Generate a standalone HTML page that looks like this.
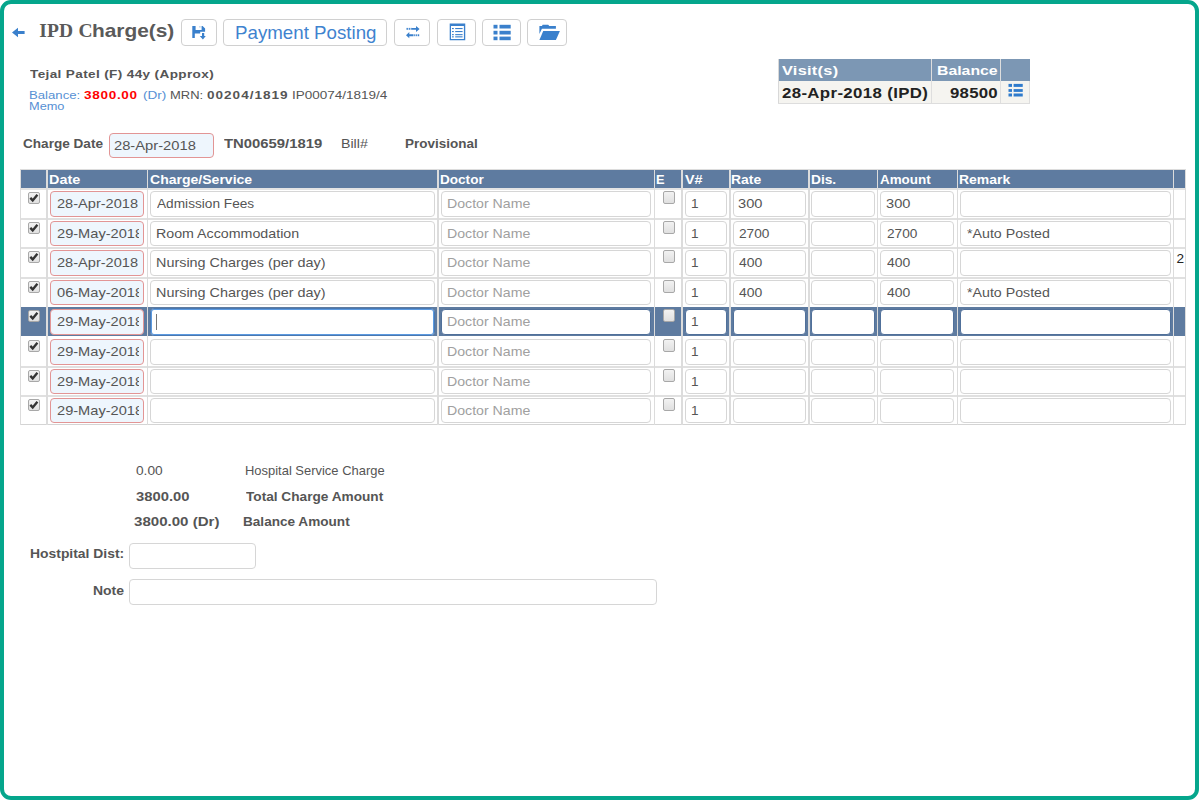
<!DOCTYPE html>
<html><head><meta charset="utf-8"><title>IPD Charge(s)</title>
<style>
html,body{margin:0;padding:0;background:#fff;}
body{width:1200px;height:800px;position:relative;overflow:hidden;font-family:"Liberation Sans",sans-serif;}
.a{position:absolute;box-sizing:border-box;}
.t{position:absolute;white-space:pre;}
.btn{position:absolute;box-sizing:border-box;border:1px solid #d0d0d0;border-radius:4px;background:#fff;}
.in{position:absolute;box-sizing:border-box;border:1px solid #d6d6d6;border-radius:4px;background:#fff;}
.dt{position:absolute;box-sizing:border-box;border:1px solid #e29595;border-radius:4px;background:#eef6fd;}
.cb{position:absolute;box-sizing:border-box;width:12px;height:12.5px;border:1px solid #a8a8a8;border-radius:2px;background:linear-gradient(#f2f2f2,#e0e0e0);}
.vl{position:absolute;width:1.5px;background:#dcdcdc;}
.hl{position:absolute;height:1.5px;background:#dcdcdc;}
</style></head><body>

<div class="a" style="left:0;top:0;width:1199px;height:800px;border:4px solid #05a68c;border-radius:11px;"></div>
<div class="btn" style="left:181px;top:19.4px;width:36.4px;height:27px;"></div>
<div class="btn" style="left:223.4px;top:19.4px;width:164.0px;height:27px;"></div>
<div class="btn" style="left:394.4px;top:19.4px;width:36.0px;height:27px;"></div>
<div class="btn" style="left:437px;top:19.4px;width:39.4px;height:27px;"></div>
<div class="btn" style="left:482px;top:19.4px;width:39.4px;height:27px;"></div>
<div class="btn" style="left:527.4px;top:19.4px;width:39.6px;height:27px;"></div>
<div class="a" style="left:778px;top:59.3px;width:251.5px;height:21.5px;background:#7c97b4;"></div>
<div class="a" style="left:778px;top:80.8px;width:251.5px;height:22.8px;background:#f5f4f0;border:1px solid #dddddd;border-top:0;"></div>
<div class="a" style="left:778px;top:59px;width:1px;height:44px;background:#d8d8d8;"></div>
<div class="a" style="left:931.2px;top:59.3px;width:1.3px;height:43.8px;background:#dedede;"></div>
<div class="a" style="left:999.8px;top:59.3px;width:1.3px;height:43.8px;background:#dedede;"></div>
<div class="dt" style="left:108.5px;top:132.8px;width:105px;height:25.6px;"></div>
<div class="a" style="left:19.5px;top:170px;width:1166.5px;height:18.3px;background:#5e7ba0;"></div>
<div class="a" style="left:19.5px;top:307.3px;width:1166.5px;height:28.8px;background:#5e7ba0;"></div>
<div class="hl" style="left:19.5px;top:169px;width:1166.5px;height:1px;"></div>
<div class="hl" style="left:19.5px;top:188px;width:1166.5px;height:2px;background:#e4e4e4;"></div>
<div class="hl" style="left:19.5px;top:218px;width:1166.5px;height:2px;background:#e0e0e0;"></div>
<div class="hl" style="left:19.5px;top:247px;width:1166.5px;height:2px;background:#e0e0e0;"></div>
<div class="hl" style="left:19.5px;top:277px;width:1166.5px;height:2px;background:#e0e0e0;"></div>
<div class="hl" style="left:19.5px;top:366px;width:1166.5px;height:2px;background:#e0e0e0;"></div>
<div class="hl" style="left:19.5px;top:395px;width:1166.5px;height:2px;background:#e0e0e0;"></div>
<div class="hl" style="left:19.5px;top:424px;width:1166.5px;height:1px;background:#d4d4d4;"></div>
<div class="vl" style="left:19.5px;top:169px;width:1px;height:256px;"></div>
<div class="vl" style="left:46.3px;top:169px;width:1.5px;height:256px;"></div>
<div class="vl" style="left:146.8px;top:169px;width:1.5px;height:256px;"></div>
<div class="vl" style="left:437.2px;top:169px;width:1.5px;height:256px;"></div>
<div class="vl" style="left:653.9px;top:169px;width:1.5px;height:256px;"></div>
<div class="vl" style="left:681.3px;top:169px;width:1.5px;height:256px;"></div>
<div class="vl" style="left:729.0px;top:169px;width:1.5px;height:256px;"></div>
<div class="vl" style="left:808.1px;top:169px;width:1.5px;height:256px;"></div>
<div class="vl" style="left:876.8px;top:169px;width:1.5px;height:256px;"></div>
<div class="vl" style="left:956.6px;top:169px;width:1.5px;height:256px;"></div>
<div class="vl" style="left:1172.8px;top:169px;width:1.5px;height:256px;"></div>
<div class="vl" style="left:1185.3px;top:169px;width:1px;height:256px;"></div>
<div class="cb" style="left:27.9px;top:191.50px;"></div>
<div class="cb" style="left:663.1px;top:191.40px;"></div>
<div class="dt" style="left:50.25px;top:191px;width:94.2px;height:26px;"></div>
<div class="in" style="left:150.4px;top:191px;width:284.8px;height:26px;"></div>
<div class="in" style="left:440.7px;top:191px;width:210.6px;height:26px;"></div>
<div class="in" style="left:685px;top:191px;width:41.7px;height:26px;"></div>
<div class="in" style="left:732.6px;top:191px;width:73.2px;height:26px;"></div>
<div class="in" style="left:811.4px;top:191px;width:63.2px;height:26px;"></div>
<div class="in" style="left:880.3px;top:191px;width:73.5px;height:26px;"></div>
<div class="in" style="left:959.6px;top:191px;width:211.0px;height:26px;"></div>
<div class="cb" style="left:27.9px;top:221.50px;"></div>
<div class="cb" style="left:663.1px;top:221.40px;"></div>
<div class="dt" style="left:50.25px;top:221px;width:94.2px;height:25px;"></div>
<div class="in" style="left:150.4px;top:221px;width:284.8px;height:25px;"></div>
<div class="in" style="left:440.7px;top:221px;width:210.6px;height:25px;"></div>
<div class="in" style="left:685px;top:221px;width:41.7px;height:25px;"></div>
<div class="in" style="left:732.6px;top:221px;width:73.2px;height:25px;"></div>
<div class="in" style="left:811.4px;top:221px;width:63.2px;height:25px;"></div>
<div class="in" style="left:880.3px;top:221px;width:73.5px;height:25px;"></div>
<div class="in" style="left:959.6px;top:221px;width:211.0px;height:25px;"></div>
<div class="cb" style="left:27.9px;top:250.50px;"></div>
<div class="cb" style="left:663.1px;top:250.40px;"></div>
<div class="dt" style="left:50.25px;top:250px;width:94.2px;height:26px;"></div>
<div class="in" style="left:150.4px;top:250px;width:284.8px;height:26px;"></div>
<div class="in" style="left:440.7px;top:250px;width:210.6px;height:26px;"></div>
<div class="in" style="left:685px;top:250px;width:41.7px;height:26px;"></div>
<div class="in" style="left:732.6px;top:250px;width:73.2px;height:26px;"></div>
<div class="in" style="left:811.4px;top:250px;width:63.2px;height:26px;"></div>
<div class="in" style="left:880.3px;top:250px;width:73.5px;height:26px;"></div>
<div class="in" style="left:959.6px;top:250px;width:211.0px;height:26px;"></div>
<div class="cb" style="left:27.9px;top:280.50px;"></div>
<div class="cb" style="left:663.1px;top:280.40px;"></div>
<div class="dt" style="left:50.25px;top:280px;width:94.2px;height:25px;"></div>
<div class="in" style="left:150.4px;top:280px;width:284.8px;height:25px;"></div>
<div class="in" style="left:440.7px;top:280px;width:210.6px;height:25px;"></div>
<div class="in" style="left:685px;top:280px;width:41.7px;height:25px;"></div>
<div class="in" style="left:732.6px;top:280px;width:73.2px;height:25px;"></div>
<div class="in" style="left:811.4px;top:280px;width:63.2px;height:25px;"></div>
<div class="in" style="left:880.3px;top:280px;width:73.5px;height:25px;"></div>
<div class="in" style="left:959.6px;top:280px;width:211.0px;height:25px;"></div>
<div class="cb" style="left:27.9px;top:309.50px;"></div>
<div class="cb" style="left:663.1px;top:309.40px;"></div>
<div class="dt" style="left:50.25px;top:308.6px;width:94.2px;height:26.6px;border-color:#50709a;border-color:#e29595;"></div>
<div class="in" style="left:150.4px;top:308.2px;width:284.8px;height:27.8px;border:1px solid #4a78b0;box-shadow:inset 0 0 0 1px #5c9ae0;"></div>
<div class="in" style="left:440.7px;top:308.6px;width:210.6px;height:26.6px;border-color:#50709a;"></div>
<div class="in" style="left:685px;top:308.6px;width:41.7px;height:26.6px;border-color:#50709a;"></div>
<div class="in" style="left:732.6px;top:308.6px;width:73.2px;height:26.6px;border-color:#50709a;"></div>
<div class="in" style="left:811.4px;top:308.6px;width:63.2px;height:26.6px;border-color:#50709a;"></div>
<div class="in" style="left:880.3px;top:308.6px;width:73.5px;height:26.6px;border-color:#50709a;"></div>
<div class="in" style="left:959.6px;top:308.6px;width:211.0px;height:26.6px;border-color:#50709a;"></div>
<div class="cb" style="left:27.9px;top:339.50px;"></div>
<div class="cb" style="left:663.1px;top:339.40px;"></div>
<div class="dt" style="left:50.25px;top:339px;width:94.2px;height:26px;"></div>
<div class="in" style="left:150.4px;top:339px;width:284.8px;height:26px;"></div>
<div class="in" style="left:440.7px;top:339px;width:210.6px;height:26px;"></div>
<div class="in" style="left:685px;top:339px;width:41.7px;height:26px;"></div>
<div class="in" style="left:732.6px;top:339px;width:73.2px;height:26px;"></div>
<div class="in" style="left:811.4px;top:339px;width:63.2px;height:26px;"></div>
<div class="in" style="left:880.3px;top:339px;width:73.5px;height:26px;"></div>
<div class="in" style="left:959.6px;top:339px;width:211.0px;height:26px;"></div>
<div class="cb" style="left:27.9px;top:369.50px;"></div>
<div class="cb" style="left:663.1px;top:369.40px;"></div>
<div class="dt" style="left:50.25px;top:369px;width:94.2px;height:25px;"></div>
<div class="in" style="left:150.4px;top:369px;width:284.8px;height:25px;"></div>
<div class="in" style="left:440.7px;top:369px;width:210.6px;height:25px;"></div>
<div class="in" style="left:685px;top:369px;width:41.7px;height:25px;"></div>
<div class="in" style="left:732.6px;top:369px;width:73.2px;height:25px;"></div>
<div class="in" style="left:811.4px;top:369px;width:63.2px;height:25px;"></div>
<div class="in" style="left:880.3px;top:369px;width:73.5px;height:25px;"></div>
<div class="in" style="left:959.6px;top:369px;width:211.0px;height:25px;"></div>
<div class="cb" style="left:27.9px;top:398.50px;"></div>
<div class="cb" style="left:663.1px;top:398.40px;"></div>
<div class="dt" style="left:50.25px;top:398px;width:94.2px;height:25px;"></div>
<div class="in" style="left:150.4px;top:398px;width:284.8px;height:25px;"></div>
<div class="in" style="left:440.7px;top:398px;width:210.6px;height:25px;"></div>
<div class="in" style="left:685px;top:398px;width:41.7px;height:25px;"></div>
<div class="in" style="left:732.6px;top:398px;width:73.2px;height:25px;"></div>
<div class="in" style="left:811.4px;top:398px;width:63.2px;height:25px;"></div>
<div class="in" style="left:880.3px;top:398px;width:73.5px;height:25px;"></div>
<div class="in" style="left:959.6px;top:398px;width:211.0px;height:25px;"></div>
<div class="in" style="left:129.4px;top:542.6px;width:126.4px;height:26px;"></div>
<div class="in" style="left:129.4px;top:579.2px;width:527.6px;height:26.1px;"></div>
<div class="t" style="left:39.20px;top:21px;font-family:'Liberation Serif';font-weight:700;font-size:19.5px;line-height:19.5px;letter-spacing:0.200px;color:#5a5a5a;">IPD C</div>
<div class="t" style="left:92.05px;top:22px;font-family:'Liberation Sans';font-weight:700;font-size:18.2px;line-height:18.2px;letter-spacing:0.000px;color:#5a5a5a;transform:scaleX(1.1471);transform-origin:0 0;">harge(s)</div>
<div class="t" style="left:235.05px;top:25px;font-family:'Liberation Sans';font-weight:400;font-size:17.8px;line-height:17.8px;letter-spacing:0.000px;color:#3f83cf;transform:scaleX(1.0526);transform-origin:0 0;">Payment Posting</div>
<div class="t" style="left:30.30px;top:69px;font-family:'Liberation Sans';font-weight:700;font-size:11.3px;line-height:11.3px;letter-spacing:0.306px;color:#555555;transform:scaleX(1.2000);transform-origin:0 0;">Tejal Patel (F) 44y (Approx)</div>
<div class="t" style="left:29.14px;top:90px;font-family:'Liberation Sans';font-weight:400;font-size:11.3px;line-height:11.3px;letter-spacing:0.000px;color:#5690d4;transform:scaleX(1.1643);transform-origin:0 0;">Balance:</div>
<div class="t" style="left:84.20px;top:90px;font-family:'Liberation Sans';font-weight:700;font-size:11.3px;line-height:11.3px;letter-spacing:0.569px;color:#ff0000;transform:scaleX(1.2000);transform-origin:0 0;">3800.00</div>
<div class="t" style="left:143.00px;top:90px;font-family:'Liberation Sans';font-weight:400;font-size:11.3px;line-height:11.3px;letter-spacing:0.000px;color:#5690d4;transform:scaleX(1.2000);transform-origin:0 0;">(Dr)</div>
<div class="t" style="left:169.85px;top:90px;font-family:'Liberation Sans';font-weight:400;font-size:11.3px;line-height:11.3px;letter-spacing:0.000px;color:#555555;transform:scaleX(1.1481);transform-origin:0 0;">MRN:</div>
<div class="t" style="left:207.00px;top:90px;font-family:'Liberation Sans';font-weight:700;font-size:11.3px;line-height:11.3px;letter-spacing:0.833px;color:#555555;transform:scaleX(1.2000);transform-origin:0 0;">00204/1819</div>
<div class="t" style="left:292.41px;top:90px;font-family:'Liberation Sans';font-weight:400;font-size:11.3px;line-height:11.3px;letter-spacing:0.000px;color:#555555;transform:scaleX(1.1949);transform-origin:0 0;">IP00074/1819/4</div>
<div class="t" style="left:29.17px;top:101px;font-family:'Liberation Sans';font-weight:400;font-size:11.3px;line-height:11.3px;letter-spacing:0.000px;color:#5690d4;transform:scaleX(1.1300);transform-origin:0 0;">Memo</div>
<div class="t" style="left:782.00px;top:64px;font-family:'Liberation Sans';font-weight:700;font-size:13.6px;line-height:13.6px;letter-spacing:0.238px;color:#ffffff;transform:scaleX(1.2000);transform-origin:0 0;">Visit(s)</div>
<div class="t" style="left:937.34px;top:64px;font-family:'Liberation Sans';font-weight:700;font-size:13.6px;line-height:13.6px;letter-spacing:-0.000px;color:#ffffff;transform:scaleX(1.1627);transform-origin:0 0;">Balance</div>
<div class="t" style="left:782.00px;top:86px;font-family:'Liberation Sans';font-weight:700;font-size:14px;line-height:14px;letter-spacing:0.302px;color:#222222;transform:scaleX(1.2000);transform-origin:0 0;">28-Apr-2018 (IPD)</div>
<div class="t" style="left:950.00px;top:86px;font-family:'Liberation Sans';font-weight:700;font-size:14px;line-height:14px;letter-spacing:0.188px;color:#222222;transform:scaleX(1.2000);transform-origin:0 0;">98500</div>
<div class="t" style="left:23.25px;top:138px;font-family:'Liberation Sans';font-weight:700;font-size:12.6px;line-height:12.6px;letter-spacing:0.000px;color:#555555;transform:scaleX(1.0777);transform-origin:0 0;">Charge Date</div>
<div class="t" style="left:114.00px;top:139px;font-family:'Liberation Sans';font-weight:400;font-size:13.6px;line-height:13.6px;letter-spacing:0.000px;color:#555555;transform:scaleX(1.0827);transform-origin:0 0;">28-Apr-2018</div>
<div class="t" style="left:223.70px;top:138px;font-family:'Liberation Sans';font-weight:700;font-size:12.6px;line-height:12.6px;letter-spacing:0.000px;color:#555555;transform:scaleX(1.1795);transform-origin:0 0;">TN00659/1819</div>
<div class="t" style="left:341.17px;top:138px;font-family:'Liberation Sans';font-weight:400;font-size:12.6px;line-height:12.6px;letter-spacing:0.000px;color:#555555;transform:scaleX(1.1261);transform-origin:0 0;">Bill#</div>
<div class="t" style="left:405.43px;top:138px;font-family:'Liberation Sans';font-weight:700;font-size:12.6px;line-height:12.6px;letter-spacing:0.000px;color:#555555;transform:scaleX(1.0716);transform-origin:0 0;">Provisional</div>
<div class="t" style="left:48.80px;top:174px;font-family:'Liberation Sans';font-weight:700;font-size:12.0px;line-height:12.0px;letter-spacing:0.000px;color:#ffffff;transform:scaleX(1.2000);transform-origin:0 0;">Date</div>
<div class="t" style="left:150.00px;top:174px;font-family:'Liberation Sans';font-weight:700;font-size:12.0px;line-height:12.0px;letter-spacing:0.000px;color:#ffffff;transform:scaleX(1.1690);transform-origin:0 0;">Charge/Service</div>
<div class="t" style="left:440.12px;top:174px;font-family:'Liberation Sans';font-weight:700;font-size:12.0px;line-height:12.0px;letter-spacing:0.000px;color:#ffffff;transform:scaleX(1.1303);transform-origin:0 0;">Doctor</div>
<div class="t" style="left:656.43px;top:174px;font-family:'Liberation Sans';font-weight:700;font-size:12.0px;line-height:12.0px;letter-spacing:0.000px;color:#ffffff;transform:scaleX(1.0714);transform-origin:0 0;">E</div>
<div class="t" style="left:685.00px;top:174px;font-family:'Liberation Sans';font-weight:700;font-size:12.0px;line-height:12.0px;letter-spacing:0.000px;color:#ffffff;transform:scaleX(1.1933);transform-origin:0 0;">V#</div>
<div class="t" style="left:731.44px;top:174px;font-family:'Liberation Sans';font-weight:700;font-size:12.0px;line-height:12.0px;letter-spacing:0.000px;color:#ffffff;transform:scaleX(1.1600);transform-origin:0 0;">Rate</div>
<div class="t" style="left:810.86px;top:174px;font-family:'Liberation Sans';font-weight:700;font-size:12.0px;line-height:12.0px;letter-spacing:0.000px;color:#ffffff;transform:scaleX(1.1429);transform-origin:0 0;">Dis.</div>
<div class="t" style="left:880.30px;top:174px;font-family:'Liberation Sans';font-weight:700;font-size:12.0px;line-height:12.0px;letter-spacing:0.000px;color:#ffffff;transform:scaleX(1.1178);transform-origin:0 0;">Amount</div>
<div class="t" style="left:958.64px;top:174px;font-family:'Liberation Sans';font-weight:700;font-size:12.0px;line-height:12.0px;letter-spacing:0.000px;color:#ffffff;transform:scaleX(1.1628);transform-origin:0 0;">Remark</div>
<div class="a" style="left:56.50px;top:193px;width:82.20px;height:21.6px;overflow:hidden;"><div class="t" style="left:56.50px;top:197px;font-family:'Liberation Sans';font-weight:400;font-size:13.6px;line-height:13.6px;letter-spacing:0.000px;color:#555555;transform:scaleX(1.0720);transform-origin:0 0;left:0;top:4px;">28-Apr-2018</div></div>
<div class="t" style="left:156.70px;top:197px;font-family:'Liberation Sans';font-weight:400;font-size:13.6px;line-height:13.6px;letter-spacing:0.000px;color:#555555;transform:scaleX(1.0052);transform-origin:0 0;">Admission Fees</div>
<div class="t" style="left:446.76px;top:197px;font-family:'Liberation Sans';font-weight:400;font-size:13.6px;line-height:13.6px;letter-spacing:0.000px;color:#a0a0a0;transform:scaleX(1.0405);transform-origin:0 0;">Doctor Name</div>
<div class="t" style="left:691.00px;top:197px;font-family:'Liberation Sans';font-weight:400;font-size:13.6px;line-height:13.6px;letter-spacing:0.000px;color:#555555;">1</div>
<div class="t" style="left:737.92px;top:197px;font-family:'Liberation Sans';font-weight:400;font-size:13.6px;line-height:13.6px;letter-spacing:0.000px;color:#555555;transform:scaleX(1.0757);transform-origin:0 0;">300</div>
<div class="t" style="left:885.72px;top:197px;font-family:'Liberation Sans';font-weight:400;font-size:13.6px;line-height:13.6px;letter-spacing:0.000px;color:#555555;transform:scaleX(1.0757);transform-origin:0 0;">300</div>
<div class="a" style="left:56.50px;top:223px;width:82.20px;height:21.6px;overflow:hidden;"><div class="t" style="left:56.50px;top:227px;font-family:'Liberation Sans';font-weight:400;font-size:13.6px;line-height:13.6px;letter-spacing:0.000px;color:#555555;transform:scaleX(1.0750);transform-origin:0 0;left:0;top:4px;">29-May-2018</div></div>
<div class="t" style="left:155.65px;top:227px;font-family:'Liberation Sans';font-weight:400;font-size:13.6px;line-height:13.6px;letter-spacing:0.000px;color:#555555;transform:scaleX(1.0467);transform-origin:0 0;">Room Accommodation</div>
<div class="t" style="left:446.76px;top:227px;font-family:'Liberation Sans';font-weight:400;font-size:13.6px;line-height:13.6px;letter-spacing:0.000px;color:#a0a0a0;transform:scaleX(1.0405);transform-origin:0 0;">Doctor Name</div>
<div class="t" style="left:691.00px;top:227px;font-family:'Liberation Sans';font-weight:400;font-size:13.6px;line-height:13.6px;letter-spacing:0.000px;color:#555555;">1</div>
<div class="t" style="left:739.00px;top:227px;font-family:'Liberation Sans';font-weight:400;font-size:13.6px;line-height:13.6px;letter-spacing:-0.000px;color:#555555;transform:scaleX(1.0040);transform-origin:0 0;">2700</div>
<div class="t" style="left:886.80px;top:227px;font-family:'Liberation Sans';font-weight:400;font-size:13.6px;line-height:13.6px;letter-spacing:-0.000px;color:#555555;transform:scaleX(1.0040);transform-origin:0 0;">2700</div>
<div class="t" style="left:966.60px;top:227px;font-family:'Liberation Sans';font-weight:400;font-size:13.6px;line-height:13.6px;letter-spacing:0.000px;color:#555555;transform:scaleX(1.0443);transform-origin:0 0;">*Auto Posted</div>
<div class="a" style="left:56.50px;top:252px;width:82.20px;height:21.6px;overflow:hidden;"><div class="t" style="left:56.50px;top:256px;font-family:'Liberation Sans';font-weight:400;font-size:13.6px;line-height:13.6px;letter-spacing:0.000px;color:#555555;transform:scaleX(1.0720);transform-origin:0 0;left:0;top:4px;">28-Apr-2018</div></div>
<div class="t" style="left:155.64px;top:256px;font-family:'Liberation Sans';font-weight:400;font-size:13.6px;line-height:13.6px;letter-spacing:0.000px;color:#555555;transform:scaleX(1.0585);transform-origin:0 0;">Nursing Charges (per day)</div>
<div class="t" style="left:446.76px;top:256px;font-family:'Liberation Sans';font-weight:400;font-size:13.6px;line-height:13.6px;letter-spacing:0.000px;color:#a0a0a0;transform:scaleX(1.0405);transform-origin:0 0;">Doctor Name</div>
<div class="t" style="left:691.00px;top:256px;font-family:'Liberation Sans';font-weight:400;font-size:13.6px;line-height:13.6px;letter-spacing:0.000px;color:#555555;">1</div>
<div class="t" style="left:739.00px;top:256px;font-family:'Liberation Sans';font-weight:400;font-size:13.6px;line-height:13.6px;letter-spacing:0.000px;color:#555555;transform:scaleX(1.0268);transform-origin:0 0;">400</div>
<div class="t" style="left:886.80px;top:256px;font-family:'Liberation Sans';font-weight:400;font-size:13.6px;line-height:13.6px;letter-spacing:0.000px;color:#555555;transform:scaleX(1.0268);transform-origin:0 0;">400</div>
<div class="a" style="left:56.50px;top:282px;width:82.20px;height:21.6px;overflow:hidden;"><div class="t" style="left:56.50px;top:286px;font-family:'Liberation Sans';font-weight:400;font-size:13.6px;line-height:13.6px;letter-spacing:0.000px;color:#555555;transform:scaleX(1.0750);transform-origin:0 0;left:0;top:4px;">06-May-2018</div></div>
<div class="t" style="left:155.64px;top:286px;font-family:'Liberation Sans';font-weight:400;font-size:13.6px;line-height:13.6px;letter-spacing:0.000px;color:#555555;transform:scaleX(1.0585);transform-origin:0 0;">Nursing Charges (per day)</div>
<div class="t" style="left:446.76px;top:286px;font-family:'Liberation Sans';font-weight:400;font-size:13.6px;line-height:13.6px;letter-spacing:0.000px;color:#a0a0a0;transform:scaleX(1.0405);transform-origin:0 0;">Doctor Name</div>
<div class="t" style="left:691.00px;top:286px;font-family:'Liberation Sans';font-weight:400;font-size:13.6px;line-height:13.6px;letter-spacing:0.000px;color:#555555;">1</div>
<div class="t" style="left:739.00px;top:286px;font-family:'Liberation Sans';font-weight:400;font-size:13.6px;line-height:13.6px;letter-spacing:0.000px;color:#555555;transform:scaleX(1.0268);transform-origin:0 0;">400</div>
<div class="t" style="left:886.80px;top:286px;font-family:'Liberation Sans';font-weight:400;font-size:13.6px;line-height:13.6px;letter-spacing:0.000px;color:#555555;transform:scaleX(1.0268);transform-origin:0 0;">400</div>
<div class="t" style="left:966.60px;top:286px;font-family:'Liberation Sans';font-weight:400;font-size:13.6px;line-height:13.6px;letter-spacing:0.000px;color:#555555;transform:scaleX(1.0443);transform-origin:0 0;">*Auto Posted</div>
<div class="a" style="left:56.50px;top:311px;width:82.20px;height:21.6px;overflow:hidden;"><div class="t" style="left:56.50px;top:315px;font-family:'Liberation Sans';font-weight:400;font-size:13.6px;line-height:13.6px;letter-spacing:0.000px;color:#555555;transform:scaleX(1.0750);transform-origin:0 0;left:0;top:4px;">29-May-2018</div></div>
<div class="t" style="left:446.76px;top:315px;font-family:'Liberation Sans';font-weight:400;font-size:13.6px;line-height:13.6px;letter-spacing:0.000px;color:#a0a0a0;transform:scaleX(1.0405);transform-origin:0 0;">Doctor Name</div>
<div class="t" style="left:691.00px;top:315px;font-family:'Liberation Sans';font-weight:400;font-size:13.6px;line-height:13.6px;letter-spacing:0.000px;color:#555555;">1</div>
<div class="a" style="left:56.50px;top:341px;width:82.20px;height:21.6px;overflow:hidden;"><div class="t" style="left:56.50px;top:345px;font-family:'Liberation Sans';font-weight:400;font-size:13.6px;line-height:13.6px;letter-spacing:0.000px;color:#555555;transform:scaleX(1.0750);transform-origin:0 0;left:0;top:4px;">29-May-2018</div></div>
<div class="t" style="left:446.76px;top:345px;font-family:'Liberation Sans';font-weight:400;font-size:13.6px;line-height:13.6px;letter-spacing:0.000px;color:#a0a0a0;transform:scaleX(1.0405);transform-origin:0 0;">Doctor Name</div>
<div class="t" style="left:691.00px;top:345px;font-family:'Liberation Sans';font-weight:400;font-size:13.6px;line-height:13.6px;letter-spacing:0.000px;color:#555555;">1</div>
<div class="a" style="left:56.50px;top:371px;width:82.20px;height:21.6px;overflow:hidden;"><div class="t" style="left:56.50px;top:375px;font-family:'Liberation Sans';font-weight:400;font-size:13.6px;line-height:13.6px;letter-spacing:0.000px;color:#555555;transform:scaleX(1.0750);transform-origin:0 0;left:0;top:4px;">29-May-2018</div></div>
<div class="t" style="left:446.76px;top:375px;font-family:'Liberation Sans';font-weight:400;font-size:13.6px;line-height:13.6px;letter-spacing:0.000px;color:#a0a0a0;transform:scaleX(1.0405);transform-origin:0 0;">Doctor Name</div>
<div class="t" style="left:691.00px;top:375px;font-family:'Liberation Sans';font-weight:400;font-size:13.6px;line-height:13.6px;letter-spacing:0.000px;color:#555555;">1</div>
<div class="a" style="left:56.50px;top:400px;width:82.20px;height:21.6px;overflow:hidden;"><div class="t" style="left:56.50px;top:404px;font-family:'Liberation Sans';font-weight:400;font-size:13.6px;line-height:13.6px;letter-spacing:0.000px;color:#555555;transform:scaleX(1.0750);transform-origin:0 0;left:0;top:4px;">29-May-2018</div></div>
<div class="t" style="left:446.76px;top:404px;font-family:'Liberation Sans';font-weight:400;font-size:13.6px;line-height:13.6px;letter-spacing:0.000px;color:#a0a0a0;transform:scaleX(1.0405);transform-origin:0 0;">Doctor Name</div>
<div class="t" style="left:691.00px;top:404px;font-family:'Liberation Sans';font-weight:400;font-size:13.6px;line-height:13.6px;letter-spacing:0.000px;color:#555555;">1</div>
<div class="t" style="left:1176.50px;top:252px;font-family:'Liberation Sans';font-weight:400;font-size:13.6px;line-height:13.6px;letter-spacing:0.000px;color:#222222;">2</div>
<div class="t" style="left:135.90px;top:465px;font-family:'Liberation Sans';font-weight:400;font-size:12.6px;line-height:12.6px;letter-spacing:0.000px;color:#555555;transform:scaleX(1.0875);transform-origin:0 0;">0.00</div>
<div class="t" style="left:244.97px;top:465px;font-family:'Liberation Sans';font-weight:400;font-size:12.6px;line-height:12.6px;letter-spacing:0.000px;color:#555555;transform:scaleX(1.0281);transform-origin:0 0;">Hospital Service Charge</div>
<div class="t" style="left:135.90px;top:491px;font-family:'Liberation Sans';font-weight:700;font-size:12.6px;line-height:12.6px;letter-spacing:0.000px;color:#555555;transform:scaleX(1.1756);transform-origin:0 0;">3800.00</div>
<div class="t" style="left:246.00px;top:491px;font-family:'Liberation Sans';font-weight:700;font-size:12.6px;line-height:12.6px;letter-spacing:0.000px;color:#555555;transform:scaleX(1.0835);transform-origin:0 0;">Total Charge Amount</div>
<div class="t" style="left:134.00px;top:516px;font-family:'Liberation Sans';font-weight:700;font-size:12.6px;line-height:12.6px;letter-spacing:0.000px;color:#555555;transform:scaleX(1.1972);transform-origin:0 0;">3800.00 (Dr)</div>
<div class="t" style="left:243.02px;top:516px;font-family:'Liberation Sans';font-weight:700;font-size:12.6px;line-height:12.6px;letter-spacing:0.000px;color:#555555;transform:scaleX(1.0786);transform-origin:0 0;">Balance Amount</div>
<div class="t" style="left:30.20px;top:548px;font-family:'Liberation Sans';font-weight:700;font-size:12.6px;line-height:12.6px;letter-spacing:0.000px;color:#555555;transform:scaleX(1.1036);transform-origin:0 0;">Hostpital Dist:</div>
<div class="t" style="left:92.99px;top:585px;font-family:'Liberation Sans';font-weight:700;font-size:12.6px;line-height:12.6px;letter-spacing:0.000px;color:#555555;transform:scaleX(1.1074);transform-origin:0 0;">Note</div>
<div class="a" style="left:155.6px;top:314px;width:1.3px;height:16px;background:#777;"></div>
<svg class="a" style="left:0;top:0" width="1200" height="800" viewBox="0 0 1200 800">
<path d="M12,32.5 L18,27.8 L18,31 L24.6,31 L24.6,34 L18,34 L18,37.2 Z" fill="#3a80cc"/>
<path d="M192.3,25.9 H195.6 V30 H201.6 V25.9 H202.6 L205.1,28.4 V31.7 H200.2 V33.6 H194.8 V38 H192.3 Z" fill="#3a80cc"/>
<rect x="199.2" y="26" width="1.4" height="1.6" fill="#3a80cc" opacity="0.35"/>
<path d="M202,33 H204.2 V36 H205.8 L202.9,39.6 L199.8,36 H202 Z" fill="#3a80cc"/>
<path d="M412,27.9 H416 V26 L419.6,28.9 L416,32 V29.8 H412 Z" fill="#3a80cc"/>
<rect x="406.5" y="27.9" width="1.4" height="1.9" fill="#3a80cc"/><rect x="408.7" y="27.9" width="1.2" height="1.9" fill="#3a80cc"/><rect x="410.6" y="27.9" width="1.2" height="1.9" fill="#3a80cc"/>
<path d="M413.5,34.3 H409.3 V32 L406,35.2 L409.3,38.3 V36.2 H413.5 Z" fill="#3a80cc"/>
<rect x="414.2" y="34.3" width="1.2" height="1.9" fill="#3a80cc"/><rect x="416.1" y="34.3" width="1.2" height="1.9" fill="#3a80cc"/><rect x="417.9" y="34.3" width="1.3" height="1.9" fill="#3a80cc"/>
<path d="M449.7,23.6 H465.25 V40.25 H449.7 Z M451,26.1 V38.9 H463.9 V26.1 Z" fill="#3a80cc" fill-rule="evenodd"/>
<rect x="452" y="28.0" width="1.8" height="1.1" fill="#3a80cc"/><rect x="455.2" y="28.0" width="7.4" height="1.1" fill="#3a80cc"/>
<rect x="452" y="31.0" width="1.8" height="1.1" fill="#3a80cc"/><rect x="455.2" y="31.0" width="7.4" height="1.1" fill="#3a80cc"/>
<rect x="452" y="34.1" width="1.8" height="1.1" fill="#3a80cc"/><rect x="455.2" y="34.1" width="7.4" height="1.1" fill="#3a80cc"/>
<rect x="452" y="36.3" width="1.8" height="1.1" fill="#3a80cc"/><rect x="455.2" y="36.3" width="7.4" height="1.1" fill="#3a80cc"/>
<rect x="493.5" y="24.8" width="4" height="3.7" fill="#3a80cc"/><rect x="499.5" y="24.8" width="11.2" height="3.7" fill="#3a80cc"/>
<rect x="493.5" y="30.8" width="4" height="3.7" fill="#3a80cc"/><rect x="499.5" y="30.8" width="11.2" height="3.7" fill="#3a80cc"/>
<rect x="493.5" y="36.6" width="4" height="3.6" fill="#3a80cc"/><rect x="499.5" y="36.6" width="11.2" height="3.6" fill="#3a80cc"/>
<path d="M539.4,26.1 H542 L542.6,24.7 H548.2 L549.3,26.1 H555.9 V28.7 H541.9 L539.4,33.9 Z" fill="#3a80cc"/>
<path d="M543.25,31 H559.9 L555.9,40.1 H539.4 Z" fill="#3a80cc"/>
<rect x="1008.5" y="83.9" width="3.5" height="3.0" fill="#2f7bcc"/><rect x="1013.6" y="83.9" width="9.15" height="3.0" fill="#2f7bcc"/>
<rect x="1008.5" y="89.1" width="3.5" height="2.8" fill="#2f7bcc"/><rect x="1013.6" y="89.1" width="9.15" height="2.8" fill="#2f7bcc"/>
<rect x="1008.5" y="93.5" width="3.5" height="3.0" fill="#2f7bcc"/><rect x="1013.6" y="93.5" width="9.15" height="3.0" fill="#2f7bcc"/>
<path d="M30.3,197.90 L32.7,200.40 L37.4,194.80" stroke="#333" stroke-width="2.4" fill="none"/>
<path d="M30.3,227.90 L32.7,230.40 L37.4,224.80" stroke="#333" stroke-width="2.4" fill="none"/>
<path d="M30.3,256.90 L32.7,259.40 L37.4,253.80" stroke="#333" stroke-width="2.4" fill="none"/>
<path d="M30.3,286.90 L32.7,289.40 L37.4,283.80" stroke="#333" stroke-width="2.4" fill="none"/>
<path d="M30.3,315.90 L32.7,318.40 L37.4,312.80" stroke="#333" stroke-width="2.4" fill="none"/>
<path d="M30.3,345.90 L32.7,348.40 L37.4,342.80" stroke="#333" stroke-width="2.4" fill="none"/>
<path d="M30.3,375.90 L32.7,378.40 L37.4,372.80" stroke="#333" stroke-width="2.4" fill="none"/>
<path d="M30.3,404.90 L32.7,407.40 L37.4,401.80" stroke="#333" stroke-width="2.4" fill="none"/>
</svg>
</body></html>
